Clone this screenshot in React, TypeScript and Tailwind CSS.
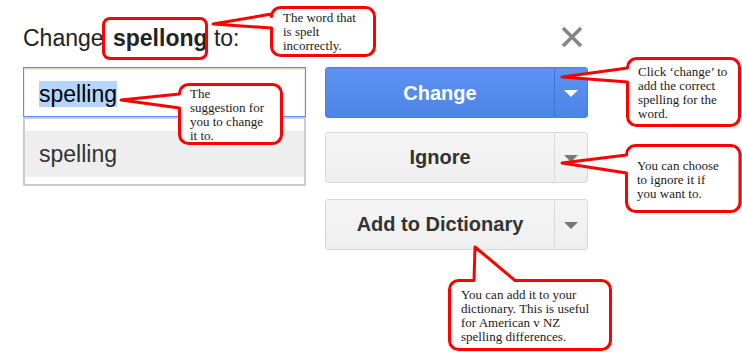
import React from "react";

type Pt = [number, number];

function bubbleLeft(x0: number, y0: number, x1: number, y1: number, r: number, b1: number, b2: number, tip: Pt) {
  return `M ${x0 + r} ${y0} H ${x1 - r} A ${r} ${r} 0 0 1 ${x1} ${y0 + r} V ${y1 - r} A ${r} ${r} 0 0 1 ${x1 - r} ${y1} H ${x0 + r} A ${r} ${r} 0 0 1 ${x0} ${y1 - r} V ${b2} L ${tip[0]} ${tip[1]} L ${x0} ${b1} V ${y0 + r} A ${r} ${r} 0 0 1 ${x0 + r} ${y0} Z`;
}

function bubbleTop(x0: number, y0: number, x1: number, y1: number, r: number, b1: number, b2: number, tip: Pt) {
  return `M ${x0 + r} ${y0} H ${b1} L ${tip[0]} ${tip[1]} L ${b2} ${y0} H ${x1 - r} A ${r} ${r} 0 0 1 ${x1} ${y0 + r} V ${y1 - r} A ${r} ${r} 0 0 1 ${x1 - r} ${y1} H ${x0 + r} A ${r} ${r} 0 0 1 ${x0} ${y1 - r} V ${y0 + r} A ${r} ${r} 0 0 1 ${x0 + r} ${y0} Z`;
}

const paths = [
  bubbleLeft(271.5, 7.5, 374.5, 55.5, 9, 14, 28, [213, 24]),
  bubbleLeft(179.5, 84.5, 281.5, 143.5, 9, 94, 108, [121, 100]),
  bubbleLeft(627.5, 58.5, 739.5, 125.5, 9, 68, 82, [562, 77]),
  bubbleLeft(626.5, 145.5, 740, 211.5, 9, 155, 173, [562, 163]),
  bubbleTop(449.5, 280.5, 610.5, 349.5, 9, 474, 515, [475, 247]),
];

function Arrow({ color }: { color: string }) {
  return (
    <svg width="14" height="7" viewBox="0 0 14 7">
      <path d="M0 0 H14 L7 7 Z" fill={color} />
    </svg>
  );
}

function GrayButton({ label, mt }: { label: string; mt: string }) {
  return (
    <div className={`${mt} flex h-[51px] w-[263px] rounded-[3px] border border-[#d8d8d8] bg-gradient-to-b from-[#f5f5f5] to-[#efefef]`}>
      <div className="flex flex-1 items-center justify-center pb-[2px] text-[20px] font-bold text-[#333]">{label}</div>
      <div className="w-px bg-[#dadada]" />
      <div className="flex w-[32px] items-center justify-center pt-[2px]">
        <Arrow color="#777777" />
      </div>
    </div>
  );
}

export default function App() {
  return (
    <div className="relative h-[352px] w-[742px] overflow-hidden bg-white font-['Liberation_Sans',Arial,sans-serif]">
      <div className="pl-[23px] pt-[25px]">
        <div className="flex h-[26px] w-[565px] items-center justify-between">
          <div className="text-[23px] leading-[26px] text-[#222]">
            Change <b className="ml-[3px]">spellong</b> to:
          </div>
          <svg width="22" height="22" viewBox="0 0 22 22" className="mr-[5px] -mt-[2px]">
            <path d="M2 2 L20 20 M20 2 L2 20" stroke="#858585" strokeWidth="3.6" />
          </svg>
        </div>

        <div className="mt-[16px] flex gap-[19px]">
          <div className="flex w-[283px] flex-col">
            <div className="flex h-[50px] items-center border border-[#5d8ff0] pl-[15px] pt-[3px] shadow-[inset_0_1px_2px_rgba(0,0,0,0.25)]">
              <span className="bg-[#b4d5fe] text-[23px] leading-[26px] text-black">spelling</span>
            </div>
            <div className="h-[69px] border-2 border-[#cccccc] pt-[12px]">
              <div className="flex h-[46px] items-center bg-[#eeeeee] pl-[14px] text-[23px] text-[#333]">spelling</div>
            </div>
          </div>

          <div className="flex flex-col">
            <div className="flex h-[51px] w-[263px] rounded-[3px] border border-[#4a7fe2] bg-gradient-to-b from-[#5d93f3] to-[#4c83e5]">
              <div className="flex flex-1 items-center justify-center text-[20px] font-bold text-white">Change</div>
              <div className="w-px bg-[#3f74d6]" />
              <div className="flex w-[32px] items-center justify-center pt-[2px]">
                <Arrow color="#ffffff" />
              </div>
            </div>
            <GrayButton label="Ignore" mt="mt-[14px]" />
            <GrayButton label="Add to Dictionary" mt="mt-[16px]" />
          </div>
        </div>
      </div>

      {/* annotations */}
      <div className="absolute left-[102px] top-[17px] h-[43px] w-[106px] rounded-[8px] border-[3px] border-[#ff0000]" />
      <svg className="absolute left-0 top-0" width="742" height="352" viewBox="0 0 742 352">
        {paths.map((d, i) => (
          <path key={i} d={d} fill="#ffffff" stroke="#ff0000" strokeWidth="3" strokeLinejoin="round" />
        ))}
      </svg>
      <div className="absolute inset-0 whitespace-nowrap font-['Liberation_Serif','Times_New_Roman',serif] text-[13px] leading-[14px] text-[#1a1a1a]">
        <div className="absolute left-[283px] top-[11px]">
          The word that<br />is spelt<br />incorrectly.
        </div>
        <div className="absolute left-[190px] top-[87px]">
          The<br />suggestion for<br />you to change<br />it to.
        </div>
        <div className="absolute left-[638px] top-[65px]">
          Click ‘change’ to<br />add the correct<br />spelling for the<br />word.
        </div>
        <div className="absolute left-[637px] top-[159px]">
          You can choose<br />to ignore it if<br />you want to.
        </div>
        <div className="absolute left-[461px] top-[288px]">
          You can add it to your<br />dictionary. This is useful<br />for American v NZ<br />spelling differences.
        </div>
      </div>
    </div>
  );
}
